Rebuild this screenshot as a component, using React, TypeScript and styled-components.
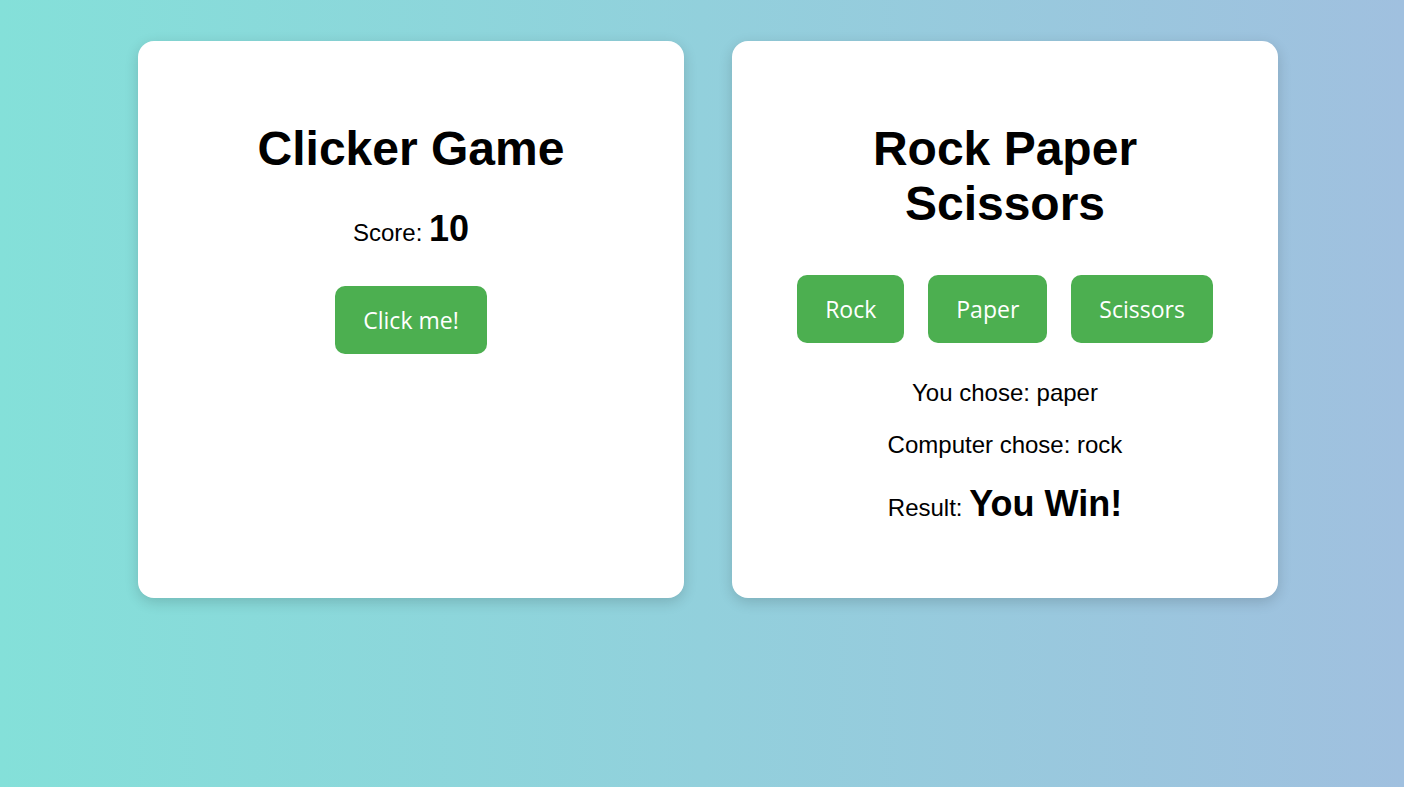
import React, { useState } from "react";
import styled, { createGlobalStyle } from "styled-components";

const Global = createGlobalStyle`
  html, body {
    margin: 0;
    padding: 0;
  }
  body {
    min-height: 787px;
    background: linear-gradient(to right, #84e0d9 0%, #a0c0df 100%);
    font-family: "Liberation Sans", Arial, sans-serif;
    color: #000;
  }
`;

const Page = styled.div`
  display: flex;
  justify-content: center;
  align-items: stretch;
  gap: 48px;
  padding: 41px 0 0 12px;
  box-sizing: border-box;
`;

const Card = styled.section`
  width: 546px;
  box-sizing: border-box;
  background: #fff;
  border-radius: 16px;
  box-shadow: 0 4px 14px rgba(0, 0, 0, 0.16);
  padding: 48px 40px 49px;
  text-align: center;
`;

const Title = styled.h1`
  font-size: 48px;
  font-weight: 700;
  margin: 32px 0 32px;
  line-height: normal;
`;

const Line = styled.p`
  font-size: 24px;
  margin: 24px 0;
`;

const Big = styled.strong`
  font-size: 36px;
  font-weight: 700;
`;

const ButtonRow = styled.div`
  display: flex;
  justify-content: center;
  gap: 24px;
  padding: 12px 0;
`;

const GameButton = styled.button`
  font-family: "Open Sans", "Noto Sans", sans-serif;
  font-size: 23px;
  line-height: 32px;
  color: #fff;
  background: #4caf50;
  border: none;
  border-radius: 10px;
  padding: 18px 28px;
  cursor: pointer;
`;

type Choice = "rock" | "paper" | "scissors";

export default function App() {
  const [score, setScore] = useState(10);
  const [you, setYou] = useState<Choice>("paper");
  const [cpu, setCpu] = useState<Choice>("rock");

  const result = (y: Choice, c: Choice) => {
    if (y === c) return "Draw!";
    if (
      (y === "rock" && c === "scissors") ||
      (y === "paper" && c === "rock") ||
      (y === "scissors" && c === "paper")
    )
      return "You Win!";
    return "You Lose!";
  };

  const play = (y: Choice) => {
    const opts: Choice[] = ["rock", "paper", "scissors"];
    setYou(y);
    setCpu(opts[Math.floor(Math.random() * 3)]);
  };

  return (
    <>
      <Global />
      <Page>
        <Card>
          <Title>Clicker Game</Title>
          <Line>
            Score: <Big>{score}</Big>
          </Line>
          <ButtonRow>
            <GameButton onClick={() => setScore(score + 1)}>Click me!</GameButton>
          </ButtonRow>
        </Card>
        <Card>
          <Title>
            Rock Paper
            <br />
            Scissors
          </Title>
          <ButtonRow>
            <GameButton onClick={() => play("rock")}>Rock</GameButton>
            <GameButton onClick={() => play("paper")}>Paper</GameButton>
            <GameButton onClick={() => play("scissors")}>Scissors</GameButton>
          </ButtonRow>
          <Line>You chose: {you}</Line>
          <Line>Computer chose: {cpu}</Line>
          <Line>
            Result: <Big>{result(you, cpu)}</Big>
          </Line>
        </Card>
      </Page>
    </>
  );
}
